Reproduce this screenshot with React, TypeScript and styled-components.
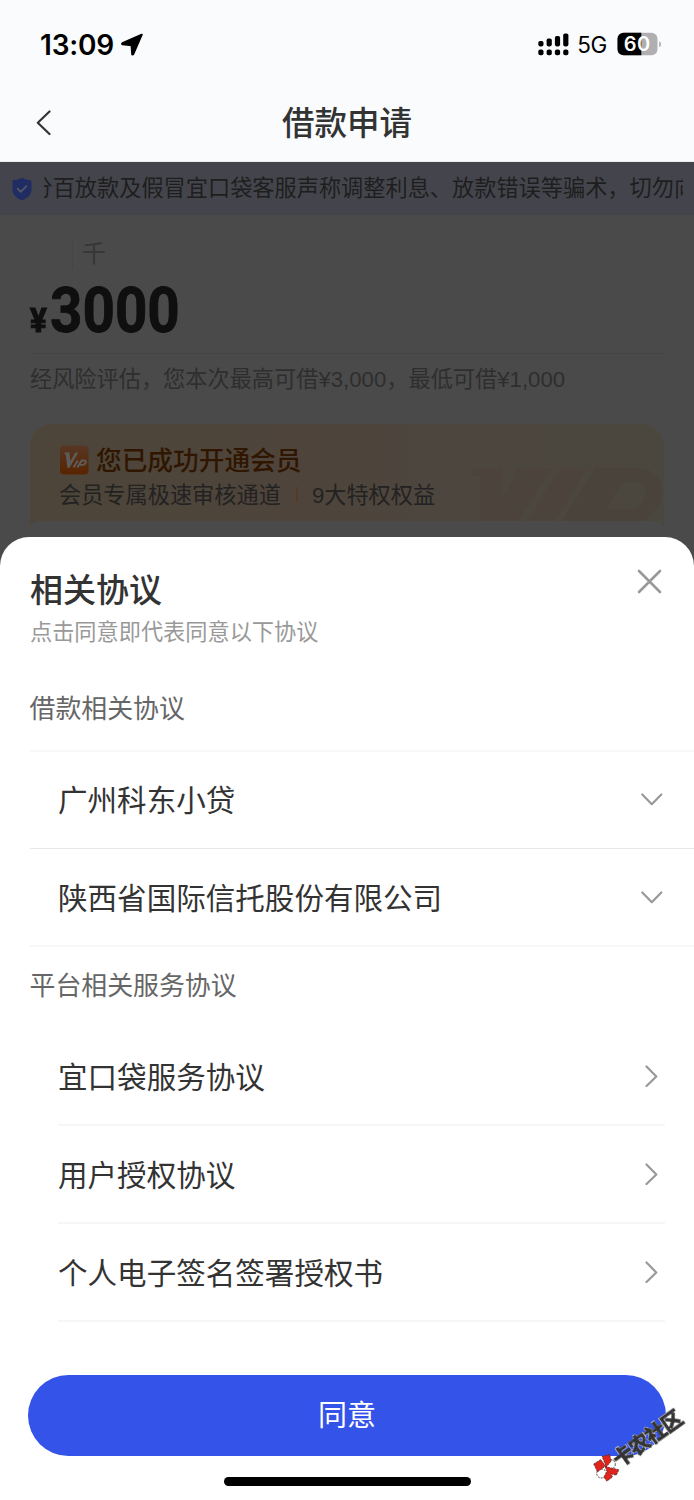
import React from 'react';
import styled, { createGlobalStyle } from 'styled-components';

const Global = createGlobalStyle`
  * { box-sizing: border-box; }
  body {
    margin: 0;
    background: #4a4a4a;
    font-family: "Liberation Sans", "Noto Sans CJK SC", sans-serif;
    color: #333;
  }
`;

const Screen = styled.div`
  position: relative;
  width: 694px;
  height: 1500px;
  overflow: hidden;
  background: #4a4a4a;
`;

const Header = styled.header`
  height: 162px;
  background: #f9fbfd;
  border-bottom: 1px solid #e9ebee;
`;

const StatusBar = styled.div`
  display: flex;
  align-items: center;
  height: 88px;
  padding: 0 32px 0 40px;
  font-family: Inter, sans-serif;
  color: #000;
`;

const Clock = styled.span`
  font-size: 28px;
  font-weight: 600;
  line-height: 34px;
  letter-spacing: -0.2px;
  margin: 1px 7px 0 0;
`;

const StatusRight = styled.div`
  display: flex;
  align-items: center;
  margin-left: auto;
`;

const Network = styled.span`
  font-size: 22.5px;
  line-height: 28px;
  letter-spacing: -0.4px;
  margin: 2px 10px 0 8px;
`;

const NavBar = styled.div`
  display: grid;
  grid-template-columns: 60px 1fr 60px;
  align-items: center;
  height: 70px;
  padding: 0 29px;
`;

const NavTitle = styled.h1`
  margin: 0;
  padding-top: 2px;
  text-align: center;
  font-size: 32.5px;
  line-height: 44px;
  font-weight: 500;
`;

const Notice = styled.div`
  display: flex;
  align-items: center;
  height: 53px;
  padding: 0 11px 0 12px;
  background: #44454c;
`;

const Marquee = styled.div`
  flex: 1;
  margin-left: 12px;
  overflow: hidden;
  white-space: nowrap;
  font-size: 22.2px;
  line-height: 32px;
  color: #1e1e1e;
`;

const MarqueeText = styled.span`
  display: inline-block;
  margin-left: -13.500px;
`;

const Loan = styled.section`
  padding: 0 30px;
`;

const UnitMark = styled.div`
  width: max-content;
  height: 30px;
  margin: 24px 0 0 42px;
  padding-left: 9px;
  border-left: 1px solid #454545;
  font-size: 24px;
  line-height: 30px;
  color: #363636;
`;

const Amount = styled.div`
  display: flex;
  align-items: baseline;
  height: 84px;
  line-height: 83px;
  color: #0f0f0f;
  font-family: Roboto, sans-serif;
  font-weight: 700;
`;

const Yen = styled.span`
  width: 20px;
  font-size: 33px;
  transform: scaleX(0.95);
  transform-origin: left;
  -webkit-text-stroke: 1.2px #0f0f0f;
`;

const Digits = styled.span`
  font-size: 62.5px;
  letter-spacing: 0;
  transform: scaleX(0.905);
  transform-origin: left;
  -webkit-text-stroke: 0.8px #0f0f0f;
`;

const Assessment = styled.p`
  margin: 0;
  height: 71px;
  padding-top: 10px;
  border-top: 1px solid #444;
  font-size: 22.2px;
  line-height: 32px;
  color: #2e2e2e;
`;

const VipCard = styled.div`
  position: relative;
  height: 130px;
  border-radius: 22px 22px 0 0;
  background: linear-gradient(90deg, #4d453a 0%, #4e443b 45%, #4d463e 62%, #4a473e 100%);
  overflow: hidden;
`;

const VipArt = styled.svg`
  position: absolute;
  right: 0;
  top: 44px;
`;

const VipBody = styled.div`
  position: relative;
  height: 97px;
  padding: 16px 30px 0 29px;
`;

const VipHeading = styled.div`
  display: flex;
  align-items: center;
  gap: 7px;
  height: 36px;
  font-size: 25.7px;
  font-weight: 500;
  color: #301600;

  svg {
    margin: 3px 0 0 1px;
  }
`;

const VipPerks = styled.div`
  display: flex;
  align-items: center;
  height: 34px;
  font-size: 22.2px;
  color: #222;
`;

const PerkRule = styled.i`
  width: 2px;
  height: 15px;
  margin: 2px 14px 0 15px;
  background: #583927;
`;

const VipFooter = styled.div`
  position: relative;
  height: 33px;
  border-radius: 8px 8px 0 0;
  background: #4a4a4a;
`;

const Sheet = styled.section`
  position: absolute;
  left: 0;
  right: 0;
  top: 537px;
  bottom: 0;
  padding-top: 31px;
  border-radius: 29px 29px 0 0;
  background: #fff;
`;

const SheetHead = styled.div`
  display: flex;
  justify-content: space-between;
  padding: 0 32px 0 30px;
  height: 79px;
`;

const SheetTitle = styled.h2`
  margin: 3px 0 0;
  font-size: 33px;
  line-height: 40px;
  font-weight: 500;
  color: #333;
`;

const SheetNote = styled.p`
  margin: 7px 0 0;
  font-size: 22.2px;
  line-height: 30px;
  color: #999;
`;

const CloseButton = styled.button`
  width: 25px;
  height: 27px;
  padding: 0;
  border: 0;
  background: none;
`;

const GroupLabel = styled.h3<{ $top: number; $bottom: number }>`
  margin: ${(p) => p.$top}px 0 ${(p) => p.$bottom}px 29.5px;
  font-size: 25.9px;
  line-height: 34px;
  font-weight: 400;
  color: #666;
`;

const LenderList = styled.div`
  margin-left: 30px;
  border-top: 2px solid #f7f7f7;
  border-bottom: 2px solid #f7f7f7;
`;

const RowText = styled.span<{ $lift?: number }>`
  padding-bottom: ${(p) => p.$lift ?? 0}px;
`;

const LenderRow = styled.div`
  display: flex;
  align-items: center;
  justify-content: space-between;
  height: 96px;
  padding: 0 31px 0 28px;
  font-size: 29.55px;

  & + & {
    height: 97px;
    border-top: 1px solid #e7e7ec;
  }

  & + & svg {
    margin-top: 2px;
  }
`;

const DocList = styled.div`
  margin: 0 29px 0 58px;
`;

const DocRow = styled.div`
  display: flex;
  align-items: center;
  justify-content: space-between;
  height: 98px;
  padding-right: 7px;
  border-bottom: 2px solid #f6f6f8;
  font-size: 29.55px;
`;

const AgreeButton = styled.button`
  display: block;
  width: 638px;
  height: 81px;
  margin: 53px 0 0 28px;
  padding: 0 0 5px;
  border: 0;
  border-radius: 41px;
  background: #3453e9;
  color: #fff;
  font-family: inherit;
  font-size: 29px;
`;

const HomeBar = styled.div`
  width: 247px;
  height: 9px;
  margin: 21px 0 0 224px;
  border-radius: 5px;
  background: #000;
`;

const Stamp = styled.svg`
  position: absolute;
  left: 584px;
  top: 1390px;
`;

const StampText = styled.text<{ $outline?: boolean }>`
  font: 700 20.5px "Noto Sans CJK SC", sans-serif;
  fill: #333;
  stroke: #333;
  stroke-width: 1px;
  filter: drop-shadow(0 0 0.6px #fff) drop-shadow(0 0 0.6px #fff) drop-shadow(0 0 0.6px #fff);
`;

const LocationArrow = () => (
  <svg width="23" height="23" viewBox="0 0 23 23">
    <path
      d="M20.800 1.600 1.400 10.200c-.5.3-.4 1.100.2 1.200l8.900.9.600 8.700c.1.700.9.800 1.200.2Z"
      stroke="#000"
      strokeWidth="1.900"
      strokeLinejoin="round"
    />
  </svg>
);

const signalTops = [8, 5.5, 3, 0.5];
const Signal = () => (
  <svg width="31" height="23" viewBox="0 0 31 23">
    {signalTops.map((top, i) => (
      <g key={top}>
        <rect x={i * 8.3 + 0.3} y={top} width="5.2" height={13.4 - top} rx="1.8" />
        <rect x={i * 8.3 + 0.3} y="16.6" width="5.2" height="5.6" rx="2" />
      </g>
    ))}
  </svg>
);

const Battery = () => (
  <svg width="45" height="24" viewBox="0 0 45 24">
    <rect x="0.5" y="0.7" width="40" height="22.6" rx="6" fill="#afafb1" />
    <path d="M24.3.7H6.5a6 6 0 0 0-6 6v10.600a6 6 0 0 0 6 6h17.800Z" />
    <path d="M42.2 9.2c2.500.9 2.500 5.100 0 6Z" fill="#afafb1" />
    <text x="20.300" y="19" textAnchor="middle" fill="#fff" fontSize="20" fontWeight="600" letterSpacing="0.500">60</text>
  </svg>
);

const Shield = () => (
  <svg width="20" height="24" viewBox="0 0 20 24">
    <path d="M10 1c2.500 1.800 5.500 2.400 9 2.800V12c0 6-3.500 8.700-9 11C4.500 20.700 1 18 1 12V3.800C4.500 3.400 7.500 2.800 10 1Z" fill="#202c62" stroke="#202c62" strokeLinejoin="round" />
    <path d="m5.600 11.600 3.200 3.200 5.600-5.700" fill="none" stroke="#555966" strokeWidth="1.800" strokeLinecap="round" />
  </svg>
);

const VipBadge = () => (
  <svg width="29" height="30" viewBox="0 0 29 30">
    <defs>
      <linearGradient id="vip" x1="0" y1="0" x2="0" y2="1">
        <stop offset="0" stopColor="#563725" />
        <stop offset="1" stopColor="#592400" />
      </linearGradient>
    </defs>
    <rect y="0.500" width="28.500" height="29" rx="4" fill="url(#vip)" />
    <path d="M4 7.500h5.400l.9 8.700 5-8.700h3L9.500 22.800H7.300L6 10.500Z" fill="#5e5c5b" />
    <path d="m13.600 22.500 4.200-7M17.400 22.500l4.200-7h3c2.400.7.8 4.300-1.700 4.400h-3" fill="none" stroke="#5e5c5b" strokeWidth="1.900" />
  </svg>
);

const Chevron = ({ direction }: { direction: 'left' | 'down' | 'right' }) => {
  if (direction === 'left')
    return (
      <svg width="25" height="26" viewBox="0 0 25 26">
        <path d="M20.500 1.500 8.800 12.700 20.500 24" fill="none" stroke="#333" strokeWidth="2.200" strokeLinejoin="round" strokeLinecap="round" />
      </svg>
    );
  if (direction === 'down')
    return (
      <svg width="22" height="14" viewBox="0 0 22 14">
        <path d="m1.300 1.500 9.500 9.700 9.500-9.700" fill="none" stroke="#999" strokeWidth="2.200" strokeLinejoin="round" strokeLinecap="round" />
      </svg>
    );
  return (
    <svg width="13" height="22" viewBox="0 0 13 22">
      <path d="M1.500 1.500 11.300 11.500 1.500 21" fill="none" stroke="#999" strokeWidth="2.200" strokeLinejoin="round" strokeLinecap="round" />
    </svg>
  );
};

const lenders = [
  { name: '广州科东小贷', lift: 4 },
  { name: '陕西省国际信托股份有限公司', lift: 2 },
];
const documents = [
  { name: '宜口袋服务协议', lift: 2 },
  { name: '用户授权协议', lift: 2 },
  { name: '个人电子签名签署授权书', lift: 1 },
];

export default function App() {
  return (
    <Screen>
      <Global />
      <Header>
        <StatusBar>
          <Clock>13:09</Clock>
          <LocationArrow />
          <StatusRight>
            <Signal />
            <Network>5G</Network>
            <Battery />
          </StatusRight>
        </StatusBar>
        <NavBar>
          <Chevron direction="left" />
          <NavTitle>借款申请</NavTitle>
        </NavBar>
      </Header>
      <Notice>
        <Shield />
        <Marquee>
          <MarqueeText>分百放款及假冒宜口袋客服声称调整利息、放款错误等骗术，切勿向</MarqueeText>
        </Marquee>
      </Notice>
      <Loan>
        <UnitMark>千</UnitMark>
        <Amount>
          <Yen>¥</Yen>
          <Digits>3000</Digits>
        </Amount>
        <Assessment>经风险评估，您本次最高可借¥3,000，最低可借¥1,000</Assessment>
        <VipCard>
          <VipArt width="194" height="55" viewBox="0 0 194 55">
            <path d="M2 0h30l-1 33L49 0h33L46 55H10V8H2ZM90 0h27L84 55H57Z" fill="#4c433c" />
            <path fillRule="evenodd" d="M125 0h42c20 0 31 20 22 36-6 12-14 19-24 19H91Zm27 14-15 27h25c13 0 20-27 4-27Z" fill="#49433c" />
          </VipArt>
          <VipBody>
            <VipHeading>
              <VipBadge />
              您已成功开通会员
            </VipHeading>
            <VipPerks>
              会员专属极速审核通道
              <PerkRule />
              9大特权权益
            </VipPerks>
          </VipBody>
          <VipFooter />
        </VipCard>
      </Loan>
      <Sheet>
        <SheetHead>
          <div>
            <SheetTitle>相关协议</SheetTitle>
            <SheetNote>点击同意即代表同意以下协议</SheetNote>
          </div>
          <CloseButton aria-label="关闭">
            <svg width="25" height="26" viewBox="0 0 25 26">
              <path d="m2 3 21 21M23 3 2 24" stroke="#999" strokeWidth="2.600" strokeLinecap="round" />
            </svg>
          </CloseButton>
        </SheetHead>
        <GroupLabel $top={45} $bottom={24}>借款相关协议</GroupLabel>
        <LenderList>
          {lenders.map(({ name, lift }) => (
            <LenderRow key={name}>
              <RowText $lift={lift}>{name}</RowText>
              <Chevron direction="down" />
            </LenderRow>
          ))}
        </LenderList>
        <GroupLabel $top={22} $bottom={25}>平台相关服务协议</GroupLabel>
        <DocList>
          {documents.map(({ name, lift }) => (
            <DocRow key={name}>
              <RowText $lift={lift}>{name}</RowText>
              <Chevron direction="right" />
            </DocRow>
          ))}
        </DocList>
        <AgreeButton>同意</AgreeButton>
        <HomeBar />
      </Sheet>
      <Stamp width="110" height="100" viewBox="0 0 110 100">
        <circle cx="26.700" cy="74.300" r="4.600" fill="#fff" stroke="#222" strokeWidth="0.800" strokeDasharray="2 1" />
        <ellipse cx="17.500" cy="83.500" rx="4.800" ry="4.500" fill="#fff" stroke="#222" strokeWidth="0.800" strokeDasharray="2 1" />
        <path
          d="m9.700 74 7-4.500 4.800 6.500-8 6ZM18 66.500l7.500-2 1.800 6.500-5 6ZM21 76.500l14 3.200-2.700 5.500-5.300-1.300 1.600 3-5.800 4.300-3-4.300 3.200-5.500Z"
          fill="#df241d"
          stroke="#222"
          strokeWidth="0.600"
          strokeDasharray="2 1"
        />
        <StampText transform="translate(35.500 78) rotate(-35.500)" textLength="80">卡农社区</StampText>
      </Stamp>
    </Screen>
  );
}
